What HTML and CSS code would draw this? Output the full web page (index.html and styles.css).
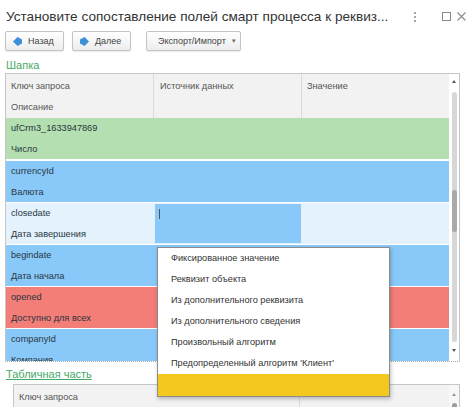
FILE: index.html
```html
<!DOCTYPE html>
<html lang="ru">
<head>
<meta charset="utf-8">
<link rel="stylesheet" href="styles.css">
</head>
<body>
<div class="window">
  <div class="titlebar">
    <div class="title">Установите сопоставление полей смарт процесса к реквиз...</div>
    <div class="win-icons">
      <svg class="ic-dots" width="4" height="12" viewBox="0 0 4 12"><circle cx="2" cy="2" r="1" fill="#8a8a8a"/><circle cx="2" cy="6" r="1" fill="#8a8a8a"/><circle cx="2" cy="10" r="1" fill="#8a8a8a"/></svg>
      <svg class="ic-sq" width="9" height="9" viewBox="0 0 9 9"><rect x="0.5" y="0.5" width="8" height="8" fill="none" stroke="#8a8a8a" stroke-width="1"/></svg>
      <svg class="ic-x" width="9" height="9" viewBox="0 0 9 9"><path d="M0.5 0.5 L8.5 8.5 M8.5 0.5 L0.5 8.5" stroke="#8a8a8a" stroke-width="1.1"/></svg>
    </div>
  </div>
  <div class="toolbar">
    <button class="btn btn-nav"><svg width="9" height="9" viewBox="0 0 9 9"><polygon points="0,4.5 4.5,0 9,2.5 9,6.5 4.5,9" fill="#3d8fd9"/></svg><span>Назад</span></button>
    <button class="btn btn-nav"><svg width="9" height="9" viewBox="0 0 9 9"><polygon points="9,4.5 4.5,0 0,2.5 0,6.5 4.5,9" fill="#3d8fd9"/></svg><span>Далее</span></button>
    <button class="btn btn-menu"><span>Экспорт/Импорт</span><span class="caret">▾</span></button>
  </div>
  <div class="group-title">Шапка</div>
  <div class="table t1">
    <div class="grid">
      <div class="thead">
        <div class="hcell c1"><div class="ln">Ключ запроса</div><div class="ln">Описание</div></div>
        <div class="hcell c2"><div class="ln">Источник данных</div></div>
        <div class="hcell c3"><div class="ln">Значение</div></div>
      </div>
      <div class="rec green first">
        <div class="cell c1"><div class="ln">ufCrm3_1633947869</div><div class="ln">Число</div></div>
        <div class="cell c2"></div><div class="cell c3"></div>
      </div>
      <div class="rec blue">
        <div class="cell c1"><div class="ln">currencyId</div><div class="ln">Валюта</div></div>
        <div class="cell c2"></div><div class="cell c3"></div>
      </div>
      <div class="rec light">
        <div class="cell c1"><div class="ln">closedate</div><div class="ln">Дата завершения</div></div>
        <div class="cell c2"><div class="editor"><span class="cursor"></span></div></div>
        <div class="cell c3"></div>
      </div>
      <div class="rec blue">
        <div class="cell c1"><div class="ln">begindate</div><div class="ln">Дата начала</div></div>
        <div class="cell c2"></div><div class="cell c3"></div>
      </div>
      <div class="rec red">
        <div class="cell c1"><div class="ln">opened</div><div class="ln">Доступно для всех</div></div>
        <div class="cell c2"></div><div class="cell c3"></div>
      </div>
      <div class="rec blue">
        <div class="cell c1"><div class="ln">companyId</div><div class="ln">Компания</div></div>
        <div class="cell c2"></div><div class="cell c3"></div>
      </div>
    </div>
    <div class="vscroll">
      <div class="arr-up"></div>
      <div class="track"><div class="thumb"></div></div>
      <div class="arr-down"></div>
    </div>
  </div>
  <a class="group-link" href="#">Табличная часть</a>
  <div class="table t2">
    <div class="grid2">
      <div class="h2 c1">Ключ запроса</div>
      <div class="h2 c2"></div>
      <div class="h2 c3"></div>
    </div>
    <div class="vscroll2">
      <div class="arr-up"></div>
      <div class="knob"></div>
    </div>
  </div>
</div>
<div class="popup">
  <div class="item">Фиксированное значение</div>
  <div class="item">Реквизит объекта</div>
  <div class="item">Из дополнительного реквизита</div>
  <div class="item">Из дополнительного сведения</div>
  <div class="item">Произвольный алгоритм</div>
  <div class="item">Предопределенный алгоритм 'Клиент'</div>
  <div class="item selected"></div>
</div>
</body>
</html>
```
FILE: styles.css
```css
* { box-sizing: border-box; }
html, body { margin: 0; padding: 0; background: #fff; }
body {
  font-family: "Liberation Sans", Arial, sans-serif;
  color: #333;
  width: 474px;
  height: 407px;
  overflow: hidden;
  position: relative;
}
.window { display: flex; flex-direction: column; }

.titlebar {
  height: 31px;
  padding: 2px 8px 0 6px;
  display: flex;
  align-items: center;
}
.title {
  font-size: 13.6px;
  color: #333;
  white-space: nowrap;
  flex: 1;
  min-width: 0;
}
.win-icons { display: flex; align-items: center; flex: none; }
.ic-dots { margin-right: 25px; }
.ic-sq { margin-right: 6px; }

.toolbar {
  height: 20px;
  display: flex;
  padding-left: 5px;
}
.btn {
  height: 20px;
  border: 1px solid #c4c4c4;
  border-radius: 2px;
  background: linear-gradient(#ffffff, #ededed);
  box-shadow: 0 1px 1px rgba(0,0,0,0.08);
  font-family: "Liberation Sans", Arial, sans-serif;
  font-size: 9px;
  color: #444;
  padding: 0;
  display: flex;
  align-items: center;
}
.btn-nav { width: 59px; padding-left: 7px; gap: 6px; }
.btn-nav + .btn-nav { margin-left: 8px; }
.btn-menu { width: 95px; margin-left: 15px; padding-left: 11px; gap: 6px; }
.caret { font-size: 7px; color: #666; }

.group-title {
  padding: 6px 0 0 6px;
  line-height: 16px;
  height: 22px;
  font-size: 11px;
  color: #45a866;
}

.table {
  border: 1px solid #c6c6c6;
  display: flex;
}
.t1 {
  margin: 0 14px 0 5px;
  height: 289px;
  border-bottom: 1px dotted #a8a8a8;
}
.grid {
  flex: 1;
  overflow: hidden;
  display: flex;
  flex-direction: column;
}
.thead {
  display: flex;
  height: 44px;
  flex: none;
  background: #f2f2f2;
  font-size: 9.2px;
  color: #555;
}
.hcell { padding-top: 2px; }
.c1 { width: 148px; flex: none; padding-left: 5px; }
.c2 { width: 148px; flex: none; padding-left: 6px; }
.c3 { flex: 1; padding-left: 5px; }
.hcell.c1, .hcell.c2 { border-right: 1px solid #dadada; }
.ln { line-height: 21px; height: 21px; white-space: nowrap; }

.rec {
  display: flex;
  height: 42px;
  flex: none;
  border-bottom: 1px solid #fff;
  font-size: 9.2px;
  color: #2a3540;
}
.rec.first { height: 43px; border-bottom-width: 2px; }
.green { background: #b4dfb0; }
.blue { background: #88c9f9; }
.red { background: #f37d77; }
.light { background: #e3f2fd; }
.cell { height: 41px; }
.cell.c2 { padding: 1px; }
.editor {
  height: 39px;
  background: #88c9f9;
  padding: 5px 0 0 4px;
}
.cursor {
  display: block;
  width: 1px;
  height: 10px;
  background: #555;
}

.vscroll {
  width: 10px;
  flex: none;
  display: flex;
  flex-direction: column;
  align-items: center;
  padding-top: 6px;
}
.arr-up {
  width: 0; height: 0;
  border-left: 2px solid transparent;
  border-right: 2px solid transparent;
  border-bottom: 3px solid #555;
}
.arr-down {
  width: 0; height: 0;
  margin-top: 7px;
  border-left: 2px solid transparent;
  border-right: 2px solid transparent;
  border-top: 3px solid #555;
}
.track {
  margin-top: 9px;
  width: 5px;
  height: 250px;
  border-radius: 3px;
  background: #d7d7d7;
}
.thumb {
  margin-top: 98px;
  width: 5px;
  height: 42px;
  border-radius: 3px;
  background: #a9a9a9;
}

.group-link {
  display: block;
  margin: 1px 0 1px 6px;
  padding-top: 2px;
  line-height: 18px;
  height: 20px;
  font-size: 11px;
  color: #45a866;
  text-decoration: underline;
  align-self: flex-start;
}

.t2 {
  margin: 0 14px 0 13px;
  height: 40px;
  border-bottom: none;
}
.grid2 {
  flex: 1;
  display: flex;
  background: #f2f2f2;
  font-size: 9.2px;
  color: #555;
}
.h2 { padding-top: 6px; line-height: 12px; }
.grid2 .c1 { width: 188px; padding-left: 5px; }
.grid2 .c2 { width: 98px; border-right: 1px solid #dadada; }
.vscroll2 {
  width: 10px;
  flex: none;
  background: #f7f7f7;
  display: flex;
  flex-direction: column;
  align-items: center;
  padding-top: 8px;
}
.vscroll2 .arr-up { border-bottom-color: #999; }
.knob {
  margin-top: 7px;
  width: 5px;
  height: 6px;
  border-radius: 3px;
  background: #9d9d9d;
}

.popup {
  position: absolute;
  left: 157px;
  top: 247px;
  width: 233px;
  height: 150px;
  background: #fff;
  border: 1px solid #8c8c8c;
  box-shadow: 1px 2px 4px rgba(0,0,0,0.25);
  font-size: 9.2px;
  color: #333;
}
.item {
  height: 21px;
  line-height: 21px;
  padding-left: 13px;
  white-space: nowrap;
}
.item.selected {
  height: 22px;
  background: #f5c81f;
}
```
